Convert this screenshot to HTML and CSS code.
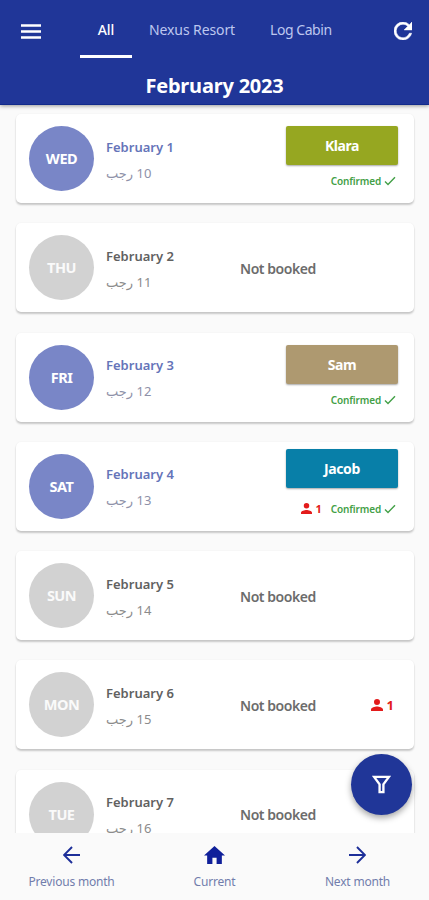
FILE: index.html
```html
<!DOCTYPE html>
<html lang="en">
<head>
<meta charset="utf-8">
<title>February 2023</title>
<link rel="stylesheet" href="styles.css">
</head>
<body>
<svg class="defs" width="0" height="0">
  <symbol id="check" viewBox="0 0 12 10"><path d="M1 5.5 4 8.5 11 1.2" fill="none" stroke="currentColor" stroke-width="1.4"/></symbol>
  <symbol id="person" viewBox="4 4 16 16"><path d="M12 12a4 4 0 1 0 0-8 4 4 0 0 0 0 8zm0 2c-2.670 0-8 1.340-8 4v2h16v-2c0-2.660-5.330-4-8-4z" fill="currentColor"/></symbol>
</svg>
<header class="header">
  <div class="toolbar">
    <svg class="menu" viewBox="0 0 20 15"><path d="M0 2h20M0 8h20M0 14h20" stroke="#fff" stroke-width="2.300"/></svg>
    <nav class="tabs">
      <span class="tab active"><span class="w-all">All</span></span>
      <span class="tab nexus">Nexus Resort</span>
      <span class="tab cabin">Log Cabin</span>
    </nav>
    <svg class="refresh" viewBox="4 4 16 16"><path d="M17.650 6.350A7.960 7.960 0 0 0 12 4a8 8 0 1 0 7.730 10h-2.080A6 6 0 1 1 12 6c1.660 0 3.140.69 4.220 1.780L13 11h7V4z" fill="#fff" stroke="#fff" stroke-width=".5"/></svg>
  </div>
  <h1>February 2023</h1>
</header>
<main class="list">
  <article class="card booked">
    <div class="day">WED</div>
    <div class="date"><b>February 1</b><span dir="rtl" lang="ar">10 رجب</span></div>
    <div class="booking"><div class="guest olive">Klara</div><div class="status"><span class="ok">Confirmed</span><svg class="check"><use href="#check"/></svg></div></div>
  </article>
  <article class="card">
    <div class="day">THU</div>
    <div class="date"><b>February 2</b><span dir="rtl" lang="ar">11 رجب</span></div>
    <div class="free">Not booked</div>
  </article>
  <article class="card booked">
    <div class="day">FRI</div>
    <div class="date"><b>February 3</b><span dir="rtl" lang="ar">12 رجب</span></div>
    <div class="booking"><div class="guest tan">Sam</div><div class="status"><span class="ok">Confirmed</span><svg class="check"><use href="#check"/></svg></div></div>
  </article>
  <article class="card booked">
    <div class="day">SAT</div>
    <div class="date"><b>February 4</b><span dir="rtl" lang="ar">13 رجب</span></div>
    <div class="booking"><div class="guest teal">Jacob</div><div class="status tall"><span class="waiting"><svg><use href="#person"/></svg>1</span><span class="ok">Confirmed</span><svg class="check"><use href="#check"/></svg></div></div>
  </article>
  <article class="card">
    <div class="day">SUN</div>
    <div class="date"><b>February 5</b><span dir="rtl" lang="ar">14 رجب</span></div>
    <div class="free">Not booked</div>
  </article>
  <article class="card">
    <div class="day">MON</div>
    <div class="date"><b>February 6</b><span dir="rtl" lang="ar">15 رجب</span></div>
    <div class="free">Not booked</div>
    <span class="waiting large"><svg><use href="#person"/></svg>1</span>
  </article>
  <article class="card">
    <div class="day">TUE</div>
    <div class="date"><b>February 7</b><span dir="rtl" lang="ar">16 رجب</span></div>
    <div class="free">Not booked</div>
  </article>
</main>
<nav class="bottom">
  <div class="item"><svg viewBox="4 4 16 16"><path d="M20 12H5.500M12.500 4.500 5 12l7.500 7.500" fill="none" stroke="#1d2f99" stroke-width="1.800"/></svg><span>Previous month</span></div>
  <div class="item current"><svg class="home" viewBox="2 3 20 17"><path d="M10 20v-6h4v6h5v-8h3L12 3 2 12h3v8z" fill="#10209a"/></svg><span>Current</span></div>
  <div class="item next"><svg viewBox="4 4 16 16"><path d="M4 12h14.500M11.500 4.500 19 12l-7.500 7.500" fill="none" stroke="#1d2f99" stroke-width="1.800"/></svg><span>Next month</span></div>
</nav>
<div class="fab"><svg viewBox="0 0 20 20"><path d="M2.200 2h15.600L12 9.800V18H8V9.800z" fill="none" stroke="#fff" stroke-width="2.500"/></svg></div>
</body>
</html>
```
FILE: styles.css
```css
* { box-sizing: border-box; }
body {
  margin: 0;
  width: 429px;
  height: 900px;
  overflow: hidden;
  display: flex;
  flex-direction: column;
  position: relative;
  background: #fafafa;
  font-family: "Noto Sans", "DejaVu Sans", sans-serif;
  white-space: nowrap;
}
.defs { position: absolute; }
svg { display: block; flex: none; }

.header {
  height: 105px;
  flex: none;
  background: #203698;
  border-bottom: 1px solid #122a8b;
  color: #fff;
  box-shadow: 0 1px 4px rgba(0, 0, 0, .4);
  z-index: 1;
}
.toolbar { height: 58px; display: flex; padding: 0 17px 0 21px; }
.menu { width: 20px; height: 16px; margin-top: 23px; }
.tabs { flex: 1; display: flex; margin-left: 39px; }
.tab { padding-top: 1px; line-height: 58px; height: 58px; font-size: 14px; color: #bdc7ef; }
.active { width: 52px; text-align: center; color: #fff; border-bottom: 3px solid #fff; }
.w-all { font-weight: 500; letter-spacing: -.1px; }
.nexus { margin-left: 17px; letter-spacing: -.1px; width: 87px; }
.cabin { margin-left: 34px; letter-spacing: -.45px; }
.refresh { width: 18px; height: 18px; margin-top: 22px; }
h1 { margin: 14px 0 0; text-align: center; font-size: 20px; line-height: 28px; font-weight: 700; letter-spacing: -.2px; }

.list {
  height: 728px;
  flex: none;
  overflow: hidden;
  display: flex;
  flex-direction: column;
  gap: 20.300px;
  padding: 9px 15px 0 16px;
}
.card {
  height: 89px;
  flex: none;
  display: grid;
  grid-template-columns: 65px 122px 1fr auto;
  column-gap: 12px;
  align-items: center;
  padding: 0 16px 0 13px;
  background: #fff;
  border-radius: 5px;
  box-shadow: 0 2px 2px rgba(0, 0, 0, .2), 0 0 2px rgba(0, 0, 0, .06);
}
.day {
  height: 65px;
  border-radius: 50%;
  background: #d2d2d2;
  color: #fafafa;
  font-size: 14.500px;
  font-weight: 700;
  line-height: 65px;
  text-align: center;
  letter-spacing: -.5px;
}
.booked .day { background: #7986c7; color: #fff; }
.date { display: flex; flex-direction: column; align-items: flex-start; line-height: 26px; padding-top: 2px; }
.date b { font-size: 13px; font-weight: 600; color: #616161; }
.booked .date b { color: #6574b9; }
.date span { font-size: 13px; color: #8b8b8b; letter-spacing: -.4px; }
.booked .date span { color: #8e91a8; }
.free { padding-top: 1px; font-size: 14px; font-weight: 600; color: #6c6c6c; letter-spacing: -.45px; }
.booking { grid-column: 3 / 5; justify-self: end; width: 112px; }
.guest {
  height: 39px;
  line-height: 39px;
  border-radius: 2px;
  text-align: center;
  font-size: 14px;
  font-weight: 700;
  color: #fff;
  letter-spacing: -.4px;
  box-shadow: 0 1px 2px rgba(0, 0, 0, .35);
}
.olive { background: #96a721; }
.tan { background: #ae9970; }
.teal { background: #087fa8; }
.status {
  height: 26px;
  padding: 6px 2px 0 0;
  display: flex;
  align-items: center;
  justify-content: flex-end;
  color: #43a047;
}
.status.tall { height: 36px; }
.ok { font-size: 10px; font-weight: 600; letter-spacing: -.15px; }
.check { width: 12px; height: 10px; margin-left: 3px; }
.waiting { display: flex; align-items: center; gap: 4px; margin-right: 9px; color: #e31b1b; font-size: 11px; font-weight: 700; }
.waiting svg { width: 11px; height: 11px; }
.waiting.large { font-size: 13px; margin-right: 4px; padding-top: 1px; }
.waiting.large svg { width: 12px; height: 12px; }

.bottom { flex: 1; display: grid; grid-template-columns: 1fr 1fr 1fr; background: #fafafa; }
.item { display: flex; flex-direction: column; align-items: center; padding-top: 13px; gap: 9px; font-size: 12px; line-height: 17px; color: #717dac; letter-spacing: -.2px; }
.item svg { width: 17px; height: 18px; }
.item .home { width: 21px; height: 18px; }
.fab {
  position: absolute;
  left: 351px;
  top: 754px;
  width: 61px;
  height: 61px;
  border-radius: 50%;
  background: #203698;
  display: grid;
  place-items: center;
  box-shadow: 0 3px 6px rgba(0, 0, 0, .35);
  z-index: 2;
}
.fab svg { width: 19px; height: 19px; }
```
